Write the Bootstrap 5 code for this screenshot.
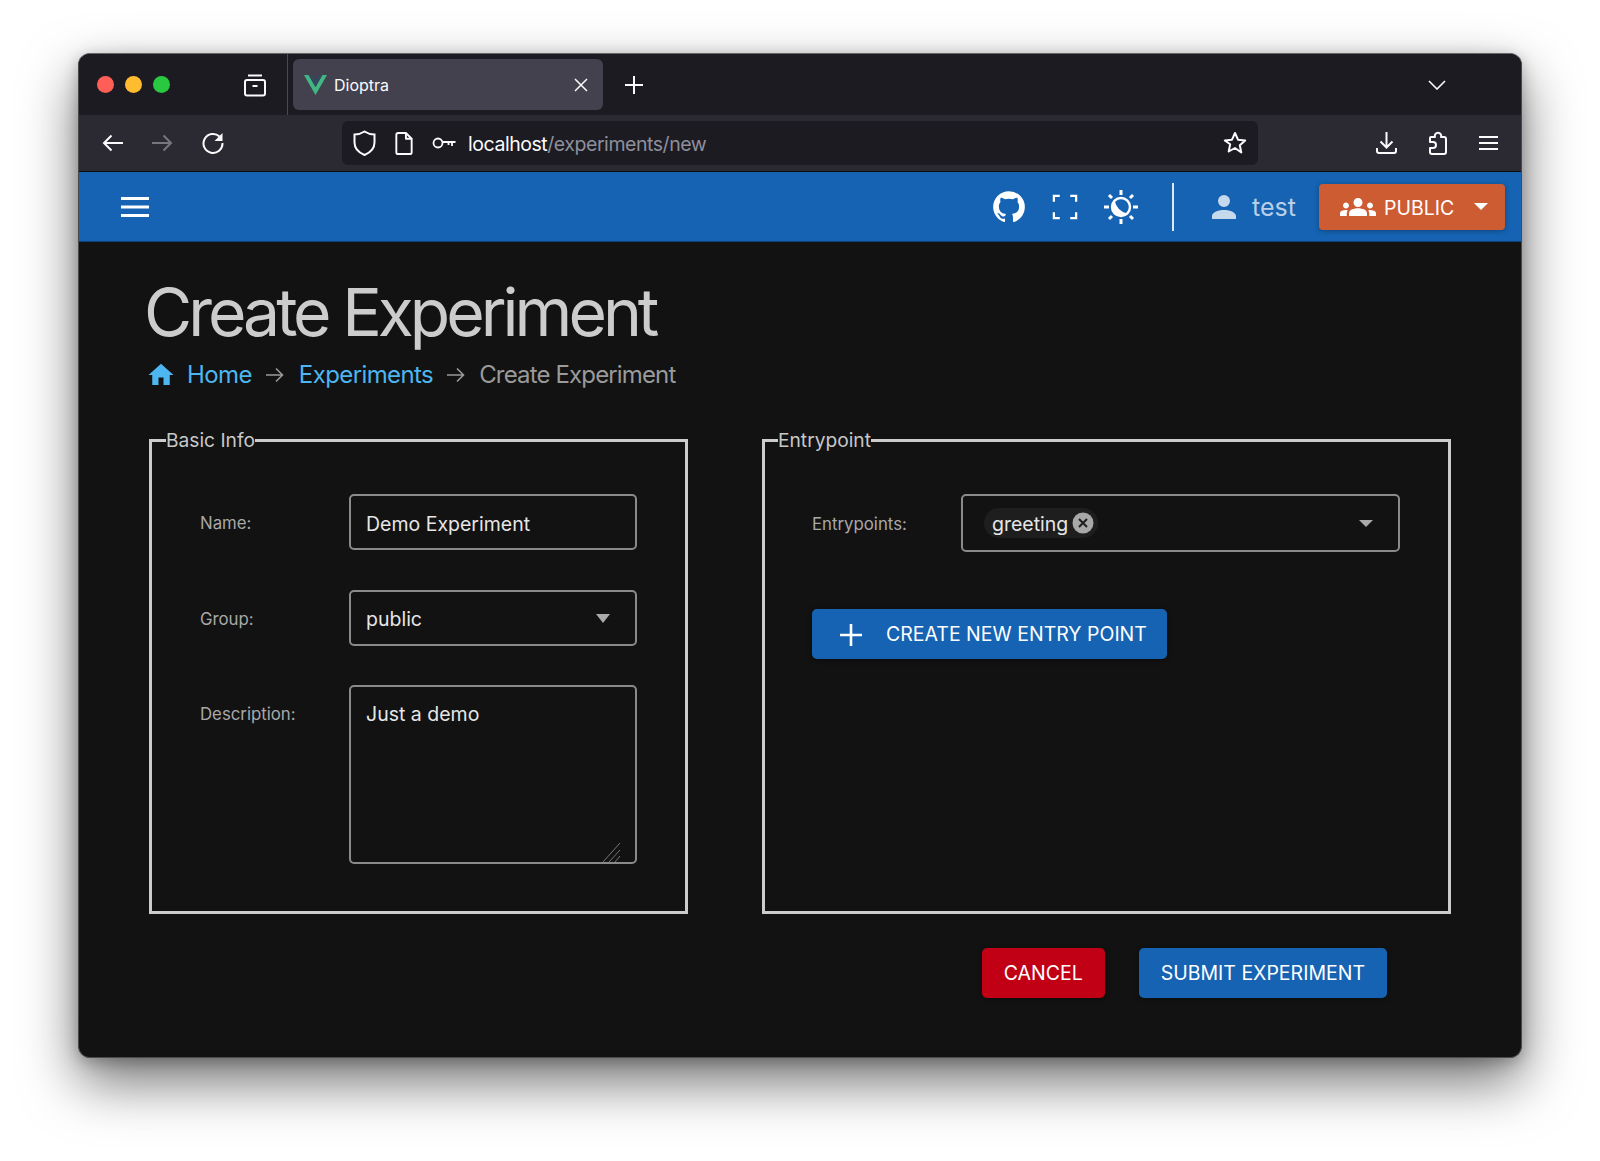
<!DOCTYPE html>
<html lang="en">
<head>
  <meta charset="UTF-8" />
  <meta name="viewport" content="width=device-width, initial-scale=1" />
  <title>Create Experiment - Dioptra</title>
  <link href="https://cdn.jsdelivr.net/npm/bootstrap@5.3.3/dist/css/bootstrap.min.css" rel="stylesheet" />
  <style>
    html, body {
      height: 100%;
    }

    body {
      background-color: #fff;
      font-family: Inter, "Liberation Sans", sans-serif;
      padding: 53px 78px 0 78px;
      overflow: hidden;
    }

    .app-window {
      height: 1005px;
      background-color: #121212;
      border-radius: 12px;
      border: 1px solid #4a4a4a;
      border-top-color: #666;
      box-shadow: 0 24px 55px rgba(0, 0, 0, .55), 0 4px 16px rgba(0, 0, 0, .25);
      overflow: hidden;
    }

    /* browser chrome */
    .tab-strip {
      height: 61px;
      background-color: #1c1b22;
      padding: 0 56px 0 0;
    }

    .traffic {
      width: 208px;
      padding-left: 18px;
      gap: 11px;
    }

    .traffic span {
      width: 17px;
      height: 17px;
      border-radius: 50%;
    }

    .archive-icon {
      margin-left: 62px;
    }

    .tab-sep {
      width: 1px;
      height: 61px;
      background-color: #4a4a50;
    }

    .browser-tab {
      width: 310px;
      height: 51px;
      margin-left: 5px;
      background-color: #42414d;
      border-radius: 6px;
      color: #fbfbfe;
      font-size: 16px;
      padding: 0 15px 0 11px;
    }

    .browser-tab .tab-title {
      margin-left: 7px;
    }

    .new-tab {
      margin-left: 22px;
    }

    .toolbar {
      height: 57px;
      background-color: #2b2a33;
      border-bottom: 1px solid #0c0c0d;
      padding-left: 23px;
      padding-right: 23px;
    }

    .toolbar .nav-icons {
      gap: 29px;
      width: 240px;
    }

    .url-bar {
      width: 916px;
      height: 44px;
      background-color: #1c1b22;
      border-radius: 6px;
      padding: 0 11px 0 11px;
    }

    .url-page {
      margin: 0 19px 0 19px;
    }

    .url-text {
      font-size: 19.5px;
      color: #fbfbfe;
      margin-left: 12px;
      padding-top: 3px;
      letter-spacing: -.45px;
    }

    .url-text span {
      color: #8f8f9d;
    }

    .tool-icons {
      margin-left: 118px;
      gap: 31px;
    }

    /* app header */
    .app-header {
      height: 70px;
      background-color: #1563b2;
      border-bottom: 1px solid #0d3f78;
    }

    .header-tools {
      padding-right: 16px;
    }

    .menu-icon {
      margin-left: 42px;
    }

    .full-icon {
      margin: 0 -2px 0 16px;
    }

    .sun-icon {
      margin-left: 19px;
    }

    .header-rule {
      width: 2px;
      height: 48px;
      background-color: #dfe9f5;
      margin: 0 32px 0 33px;
    }

    .user-name {
      color: #b9cfe8;
      font-size: 25px;
      margin-left: 10px;
      margin-right: 23px;
      padding-top: 2px;
    }

    .group-btn {
      width: 186px;
      height: 46px;
      background-color: #cd5c33;
      color: #fff;
      font-size: 19.5px;
      border: 0;
      border-radius: 4px;
      box-shadow: 0 1px 5px rgba(0, 0, 0, .3);
      padding: 0 17px 0 21px;
    }

    .group-btn:hover {
      background-color: #cd5c33;
      color: #fff;
    }

    .caret-down {
      width: 0;
      height: 0;
      border-left: 7px solid transparent;
      border-right: 7px solid transparent;
      border-top: 7px solid currentColor;
    }

    /* page */
    .page-body {
      padding: 30px 70px 0 70px;
    }

    .page-title {
      color: #ccc;
      font-size: 66px;
      font-weight: 375;
      letter-spacing: -4px;
      line-height: 80px;
      margin: 0 0 0 -5px;
    }

    .crumbs {
      font-size: 24px;
      letter-spacing: -.6px;
      margin: 5px 0 0;
      align-items: center;
    }

    .crumbs a {
      color: #4db5f0;
      text-decoration: none;
    }

    .crumbs .current-crumb {
      color: #9a9a9a;
      letter-spacing: -.85px;
      margin-left: -1px;
    }

    .crumb-home {
      margin: 0 11px 0 -3px;
    }

    .crumb-arrow {
      margin: 0 15px 0 14px;
    }

    .form-columns {
      margin-top: 35px;
    }

    .info-box {
      border: 3px solid #ccc;
      height: 486px;
      padding: 0 48px;
      margin: 0;
      min-width: 0;
    }

    .info-box legend {
      float: none;
      width: auto;
      font-size: 19.2px;
      line-height: 24px;
      color: #c8c8c8;
      padding: 0;
      margin: 0 0 0 -34px;
    }

    .basic-box {
      width: 539px;
    }

    .entry-box {
      width: 689px;
      padding-left: 47px;
    }

    .field-row {
      margin-top: 40px;
    }

    .first-row {
      margin-top: 42px;
    }

    .desc-row {
      margin-top: 39px;
    }

    .field-label {
      width: 149px;
      flex: none;
      font-size: 16.8px;
      color: #a8a8a8;
      margin: 0;
      padding-top: 4px;
    }

    .desc-label {
      margin-top: 13px;
    }

    .dark-input.form-control,
    .dark-input.form-select {
      width: 288px;
      height: 56px;
      color: #e6e6e6;
      font-size: 19.5px;
      background-color: transparent;
      border: 2px solid #8a8a8a;
      border-radius: 5px;
      padding: 4px 15px 0;
      box-shadow: none;
    }

    .dark-input.form-select {
      background-image: url("data:image/svg+xml,%3csvg xmlns='http://www.w3.org/2000/svg' viewBox='0 0 14 9'%3e%3cpath fill='%23aaa' d='M0 0h14L7 9z'/%3e%3c/svg%3e");
      background-size: 14px 9px;
      background-position: right 25px center;
    }

    textarea.dark-input.form-control {
      height: 179px;
      padding-top: 14px;
      line-height: 27px;
      resize: none;
    }

    .resize-grip {
      position: absolute;
      right: 16px;
      bottom: 2px;
    }

    .combo-box {
      width: 439px;
      height: 58px;
      border: 2px solid #8a8a8a;
      border-radius: 5px;
      padding: 0 25px 0 21px;
      color: #aaa;
    }

    .entry-chip {
      height: 30px;
      background-color: #1e1e1e;
      border-radius: 15px;
      color: #e6e6e6;
      font-size: 19.5px;
      padding: 3px 3px 0 8px;
      gap: 3px;
    }

    .entry-chip svg {
      margin-top: -3px;
    }

    .solid-btn {
      height: 50px;
      color: #fff;
      font-size: 19.5px;
      border: 0;
      border-radius: 5px;
      padding: 1px 22px 0;
      box-shadow: 0 1px 5px rgba(0, 0, 0, .4);
      white-space: nowrap;
    }

    .blue-btn,
    .blue-btn:hover {
      background-color: #1563b2;
      color: #fff;
    }

    .red-btn,
    .red-btn:hover {
      background-color: #c10015;
      color: #fff;
    }

    .create-btn {
      width: 355px;
      margin-top: 57px;
      gap: 24px;
      padding: 1px 22px 0 28px;
    }

    .form-actions {
      margin-top: 34px;
      padding-right: 64px;
      gap: 34px;
    }
  </style>
</head>
<body>
  <div class="app-window d-flex flex-column">

    <!-- Browser tabs -->
    <div class="tab-strip d-flex align-items-center flex-shrink-0">
      <div class="traffic d-flex align-items-center">
        <span style="background:#ff5f57"></span>
        <span style="background:#febc2e"></span>
        <span style="background:#28c840"></span>
        <svg class="archive-icon flex-shrink-0" width="24" height="24" viewBox="0 0 24 24" fill="none" stroke="#fbfbfe" stroke-width="2"><path d="M5 2.500h14"/><rect x="2" y="7" width="20" height="15.500" rx="2"/><path d="M9.500 13h5"/></svg>
      </div>
      <div class="tab-sep"></div>
      <div class="browser-tab d-flex align-items-center">
        <svg width="23" height="20" viewBox="0 0 23 20"><path fill="#41b883" d="M0 0h4.600l6.900 12L18.400 0H23L11.500 20z"/><path fill="#35495e" d="M4.600 0h3.700l3.200 5.500L14.700 0h3.700l-6.900 12z"/></svg>
        <span class="tab-title flex-grow-1">Dioptra</span>
        <svg width="14" height="14" viewBox="0 0 14 14" stroke="#fbfbfe" stroke-width="1.500"><path d="M1 1l12 12M13 1L1 13"/></svg>
      </div>
      <svg class="new-tab" width="18" height="18" viewBox="0 0 18 18" stroke="#fbfbfe" stroke-width="2"><path d="M9 0v18M0 9h18"/></svg>
      <svg class="ms-auto" width="18" height="10" viewBox="0 0 18 10" fill="none" stroke="#fbfbfe" stroke-width="1.600"><path d="M1 1l8 8 8-8"/></svg>
      <div style="width:19px"></div>
    </div>

    <!-- Browser toolbar -->
    <div class="toolbar d-flex align-items-center flex-shrink-0">
      <div class="nav-icons d-flex align-items-center">
        <svg width="21" height="18" viewBox="0 0 21 18" fill="none" stroke="#fbfbfe" stroke-width="2"><path d="M21 9H2M9.500 1.500L2 9l7.500 7.500"/></svg>
        <svg width="21" height="18" viewBox="0 0 21 18" fill="none" stroke="#77767f" stroke-width="2"><path d="M0 9h19M11.500 1.500L19 9l-7.500 7.500"/></svg>
        <svg width="22" height="22" viewBox="0 0 22 22" fill="none" stroke="#fbfbfe" stroke-width="2"><path d="M17.500 4.500A9.500 9.500 0 1 0 20.500 11"/><path fill="#fbfbfe" stroke="none" d="M20.500 1v8h-8z"/></svg>
      </div>
      <div class="url-bar d-flex align-items-center">
        <svg width="23" height="26" viewBox="0 0 23 26" fill="none" stroke="#fbfbfe" stroke-width="2"><path d="M11.500 1.500c3 2 6 3 10 3v8c0 6-4 10-10 12.500C5.500 22.500 1.500 18.500 1.500 12.500v-8c4 0 7-1 10-3z"/></svg>
        <svg class="url-page" width="18" height="23" viewBox="0 0 18 24" fill="none" stroke="#fbfbfe" stroke-width="2" stroke-linejoin="round"><path d="M3 1h8l6 6v14a2 2 0 0 1-2 2H3a2 2 0 0 1-2-2V3a2 2 0 0 1 2-2z"/><path d="M11 1v6h6"/></svg>
        <svg width="24" height="14" viewBox="0 0 24 14" fill="none" stroke="#fbfbfe" stroke-width="1.800"><circle cx="6" cy="7" r="4.500"/><path d="M10.500 6h13M20 6v4M16.500 6v3"/></svg>
        <div class="url-text">localhost<span>/experiments/new</span></div>
        <svg class="ms-auto" width="24" height="24" viewBox="0 0 24 24" fill="none" stroke="#fbfbfe" stroke-width="2" stroke-linejoin="round"><path d="M12 2l3 6.700 7.200.8-5.400 4.800 1.500 7.200L12 17l-6.300 3.500 1.500-7.200L1.800 9.500 9 8.700z"/></svg>
      </div>
      <div class="tool-icons d-flex align-items-center">
        <svg width="21" height="24" viewBox="0 0 21 24" fill="none" stroke="#fbfbfe" stroke-width="2"><path d="M10.500 1v15M4.500 10.500l6 6 6-6M1 17v3a2 2 0 0 0 2 2h15a2 2 0 0 0 2-2v-3"/></svg>
        <svg width="20" height="24" viewBox="0 0 20 24" fill="none" stroke="#fbfbfe" stroke-width="2" stroke-linejoin="round"><path d="M3 6h4a3.200 3.200 0 1 1 6 0h3a2 2 0 0 1 2 2v13a2 2 0 0 1-2 2H4a2 2 0 0 1-2-2v-4h3a2.800 2.800 0 0 0 0-6H2V7a1 1 0 0 1 1-1z"/></svg>
        <svg width="19" height="16" viewBox="0 0 19 16" stroke="#fbfbfe" stroke-width="2"><path d="M0 2h19M0 8h19M0 14h19"/></svg>
      </div>
    </div>

    <!-- App header -->
    <nav class="app-header navbar p-0 d-flex align-items-center flex-nowrap flex-shrink-0">
      <svg class="menu-icon" width="28" height="20" viewBox="0 0 28 20" fill="#fff"><path d="M0 0h28v3H0zM0 8.500h28v3H0zM0 17h28v3H0z"/></svg>
      <div class="header-tools d-flex align-items-center ms-auto">
        <svg width="38" height="38" viewBox="0 0 24 24" fill="#fff"><path d="M12,2A10,10 0 0,0 2,12C2,16.42 4.87,20.17 8.84,21.5C9.34,21.58 9.5,21.27 9.5,21C9.5,20.77 9.5,20.14 9.5,19.31C6.73,19.91 6.14,17.97 6.14,17.97C5.68,16.81 5.03,16.5 5.03,16.5C4.12,15.88 5.1,15.9 5.1,15.9C6.1,15.97 6.63,16.93 6.63,16.93C7.5,18.45 8.97,18 9.54,17.76C9.63,17.11 9.89,16.67 10.17,16.42C7.95,16.17 5.62,15.31 5.62,11.5C5.62,10.39 6,9.5 6.65,8.79C6.55,8.54 6.2,7.5 6.75,6.15C6.75,6.15 7.59,5.88 9.5,7.17C10.29,6.95 11.15,6.84 12,6.84C12.85,6.84 13.71,6.95 14.5,7.17C16.41,5.88 17.25,6.15 17.25,6.15C17.8,7.5 17.45,8.54 17.35,8.79C18,9.5 18.38,10.39 18.38,11.5C18.38,15.32 16.04,16.16 13.81,16.41C14.17,16.72 14.5,17.33 14.5,18.26C14.5,19.6 14.5,20.68 14.5,21C14.5,21.27 14.66,21.59 15.17,21.5C19.14,20.16 22,16.42 22,12A10,10 0 0,0 12,2Z"/></svg>
        <svg class="full-icon" width="42" height="42" viewBox="0 0 24 24" fill="#fff"><path d="M5,5H9V6.300H6.300V9H5V5M15,5H19V9H17.700V6.300H15V5M17.700,15H19V19H15V17.700H17.700V15M9,17.700V19H5V15H6.300V17.700H9Z"/></svg>
        <svg class="sun-icon" width="36" height="36" viewBox="0 0 36 36"><g stroke="#fff" stroke-width="3" fill="none"><path d="M18 1v5M18 30v5M1 18h5M30 18h5M6 6l3 3M27 27l3 3M30 6l-3 3M9 27l-3 3"/></g><circle cx="18" cy="18" r="9" stroke="#fff" stroke-width="2.400" fill="none"/><path fill="#fff" d="M11.600 11.600A9 9 0 0 0 24.400 24.400Q14 22.500 11.600 11.600z"/></svg>
        <div class="header-rule"></div>
        <svg width="36" height="36" viewBox="0 0 24 24" fill="#c6d8ec"><path d="M12,4A4,4 0 0,1 16,8A4,4 0 0,1 12,12A4,4 0 0,1 8,8A4,4 0 0,1 12,4M12,14C16.42,14 20,15.79 20,18V20H4V18C4,15.79 7.58,14 12,14Z"/></svg>
        <span class="user-name">test</span>
        <button class="group-btn btn d-flex align-items-center" type="button">
          <svg class="me-2" width="36" height="36" viewBox="0 0 24 24" fill="#fff"><path d="M4,13c1.100,0 2,-0.900 2,-2c0,-1.100 -0.900,-2 -2,-2s-2,0.900 -2,2C2,12.100 2.900,13 4,13z M5.130,14.100C4.760,14.040 4.390,14 4,14c-0.990,0 -1.930,0.210 -2.780,0.580C0.480,14.900 0,15.620 0,16.430V18l4.500,0v-1.610C4.500,15.560 4.730,14.780 5.130,14.100z M20,13c1.100,0 2,-0.900 2,-2c0,-1.100 -0.900,-2 -2,-2s-2,0.900 -2,2C18,12.100 18.900,13 20,13z M24,16.430c0,-0.810 -0.480,-1.530 -1.220,-1.850C21.930,14.210 20.990,14 20,14c-0.390,0 -0.760,0.040 -1.130,0.100c0.400,0.680 0.630,1.460 0.630,2.290V18l4.500,0V16.430z M16.240,13.650c-1.170,-0.520 -2.610,-0.900 -4.240,-0.900c-1.630,0 -3.070,0.390 -4.240,0.900C6.680,14.130 6,15.210 6,16.390V18h12v-1.610C18,15.210 17.320,14.130 16.240,13.650z M12,12c1.660,0 3,-1.340 3,-3c0,-1.660 -1.340,-3 -3,-3s-3,1.340 -3,3C9,10.660 10.340,12 12,12z"/></svg>
          <span class="pt-1">PUBLIC</span>
          <span class="caret-down ms-auto"></span>
        </button>
      </div>
    </nav>

    <!-- Page -->
    <main class="page-body flex-grow-1">
      <h1 class="page-title">Create Experiment</h1>
      <nav aria-label="breadcrumb">
        <ol class="crumbs breadcrumb">
          <li class="d-flex align-items-center">
            <svg class="crumb-home" width="30" height="30" viewBox="0 0 24 24" fill="#4db5f0"><path d="M10,20V14H14V20H19V12H22L12,3L2,12H5V20H10Z"/></svg>
            <a href="#">Home</a>
          </li>
          <li class="crumb-arrow d-flex"><svg width="18" height="16" viewBox="0 0 18 16" fill="none" stroke="#9a9a9a" stroke-width="1.600"><path d="M0 8h16.500M10 1.500L16.500 8 10 14.500"/></svg></li>
          <li><a href="#">Experiments</a></li>
          <li class="crumb-arrow d-flex"><svg width="18" height="16" viewBox="0 0 18 16" fill="none" stroke="#9a9a9a" stroke-width="1.600"><path d="M0 8h16.500M10 1.500L16.500 8 10 14.500"/></svg></li>
          <li class="current-crumb">Create Experiment</li>
        </ol>
      </nav>

      <div class="form-columns d-flex justify-content-between">
        <fieldset class="info-box basic-box">
          <legend>Basic Info</legend>
          <div class="field-row first-row d-flex align-items-center">
            <label class="field-label" for="nameInput">Name:</label>
            <input id="nameInput" class="dark-input form-control" type="text" value="Demo Experiment" />
          </div>
          <div class="field-row d-flex align-items-center">
            <label class="field-label" for="groupInput">Group:</label>
            <select id="groupInput" class="dark-input form-select"><option>public</option></select>
          </div>
          <div class="field-row desc-row d-flex align-items-start">
            <label class="field-label desc-label" for="descInput">Description:</label>
            <div class="position-relative">
              <textarea id="descInput" class="dark-input form-control">Just a demo</textarea>
              <svg class="resize-grip" width="18" height="19" viewBox="0 0 18 19" stroke="#777" stroke-width="1"><path d="M0 19L17 0M6 19L17 7M12 19l5-6"/></svg>
            </div>
          </div>
        </fieldset>

        <fieldset class="info-box entry-box">
          <legend>Entrypoint</legend>
          <div class="field-row first-row d-flex align-items-center">
            <label class="field-label">Entrypoints:</label>
            <div class="combo-box d-flex align-items-center justify-content-between">
              <span class="entry-chip d-flex align-items-center">
                greeting
                <svg width="24" height="24" viewBox="0 0 24 24"><circle cx="12" cy="12" r="10.500" fill="#a8a8a8"/><path d="M8 8l8 8M16 8l-8 8" stroke="#1e1e1e" stroke-width="2"/></svg>
              </span>
              <span class="caret-down"></span>
            </div>
          </div>
          <button class="solid-btn blue-btn create-btn btn d-flex align-items-center" type="button">
            <svg class="flex-shrink-0" width="22" height="22" viewBox="0 0 22 22" stroke="#fff" stroke-width="2.600"><path d="M11 0v22M0 11h22"/></svg>
            <span>CREATE NEW ENTRY POINT</span>
          </button>
        </fieldset>
      </div>

      <div class="form-actions d-flex justify-content-end">
        <button class="solid-btn red-btn btn" type="button">CANCEL</button>
        <button class="solid-btn blue-btn btn" type="button">SUBMIT EXPERIMENT</button>
      </div>
    </main>
  </div>

  <script src="https://cdn.jsdelivr.net/npm/bootstrap@5.3.3/dist/js/bootstrap.bundle.min.js"></script>
</body>
</html>
